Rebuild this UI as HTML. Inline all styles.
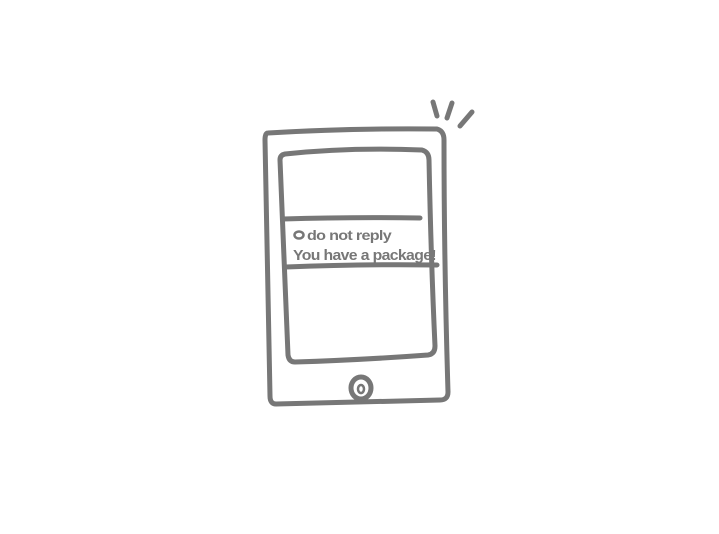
<!DOCTYPE html>
<html><head><style>
html,body{margin:0;padding:0;background:#fff;width:719px;height:534px;overflow:hidden}
</style></head><body>
<svg width="719" height="534" viewBox="0 0 719 534" xmlns="http://www.w3.org/2000/svg">
<g fill="none" stroke="#777" stroke-width="5" stroke-linecap="round" stroke-linejoin="round">
<path d="M268 133 Q350 128 437 129 Q444 131 444 140 Q444 260 448 392 Q448 400 440 400 Q360 402 276 404 Q270 404 270 396 Q268 270 265 140 Q265 133 268 133 Z"/>
<path d="M285 154 Q350 147 422 150 Q429 152 429 160 Q431 260 435 346 Q435 354 428 355 Q360 360 295 362 Q289 362 288 355 Q284 260 280 160 Q280 155 285 154 Z"/>
<path d="M283 219 Q350 217 420 218"/>
<path d="M286 267 Q360 264 437 265"/>
<ellipse cx="361" cy="388" rx="10" ry="11"/>
<path d="M433 102 L437 116 M452 103 L447 118 M472 112 L460 126"/>
</g>
<ellipse cx="361" cy="389" rx="3" ry="4" fill="none" stroke="#777" stroke-width="2.5"/>
<g fill="#777" font-family="'Liberation Sans',sans-serif" font-weight="bold">
<ellipse cx="299" cy="235" rx="4.5" ry="3.5" fill="none" stroke="#777" stroke-width="2.5"/>
<text x="307" y="240" font-size="14" letter-spacing="-0.6" textLength="84" lengthAdjust="spacingAndGlyphs">do not reply</text>
<text x="293" y="260" font-size="15" letter-spacing="-0.6" textLength="143" lengthAdjust="spacingAndGlyphs">You have a package!</text>
</g>
</svg>
</body></html>
